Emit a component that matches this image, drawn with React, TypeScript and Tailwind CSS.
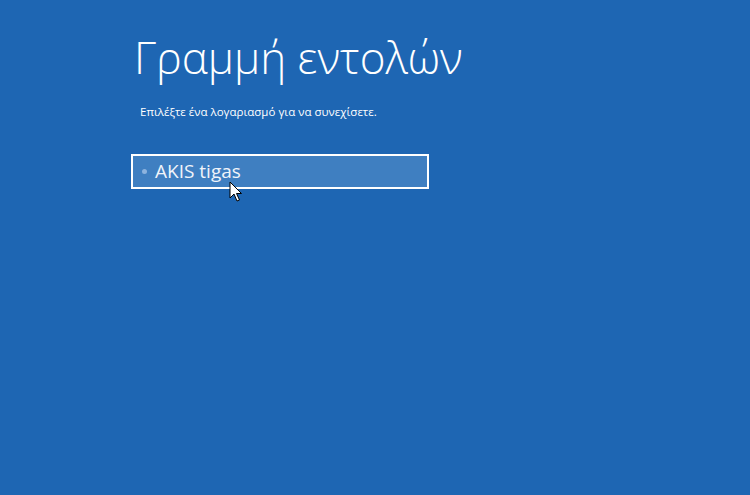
export default function App() {
  return (
    <div className="w-[750px] h-[495px] bg-[#1e66b3] text-white overflow-hidden" style={{ fontFamily: '"Open Sans", "Noto Sans", sans-serif' }}>
      <div className="pl-[134px] pt-[27px]">
        <h1 className="text-[44px] font-light leading-[60px]">Γραμμή εντολών</h1>
        <p className="mt-[18px] ml-[6px] text-[11.5px] leading-[14px]">Επιλέξτε ένα λογαριασμό για να συνεχίσετε.</p>
        <div className="relative mt-[35px] -ml-[3px] w-[298px] h-[35px] border-2 border-white bg-[#3f7fc1] flex items-center">
          <span className="ml-[9px] w-[5px] h-[5px] rounded-full bg-[#8db3de]" />
          <span className="ml-[8px] text-[19px] leading-none text-[#f0f4fa]">AKIS tigas</span>
          <svg className="absolute left-[96px] top-[25px]" width="14" height="22" viewBox="0 0 14 22">
            <path d="M1 1 L1 17 L5 13 L8 20 L10.5 19 L7.5 12.5 L12.5 12.5 Z" fill="#ffffff" stroke="#000000" strokeWidth="1" strokeLinejoin="miter" />
          </svg>
        </div>
      </div>
    </div>
  );
}
